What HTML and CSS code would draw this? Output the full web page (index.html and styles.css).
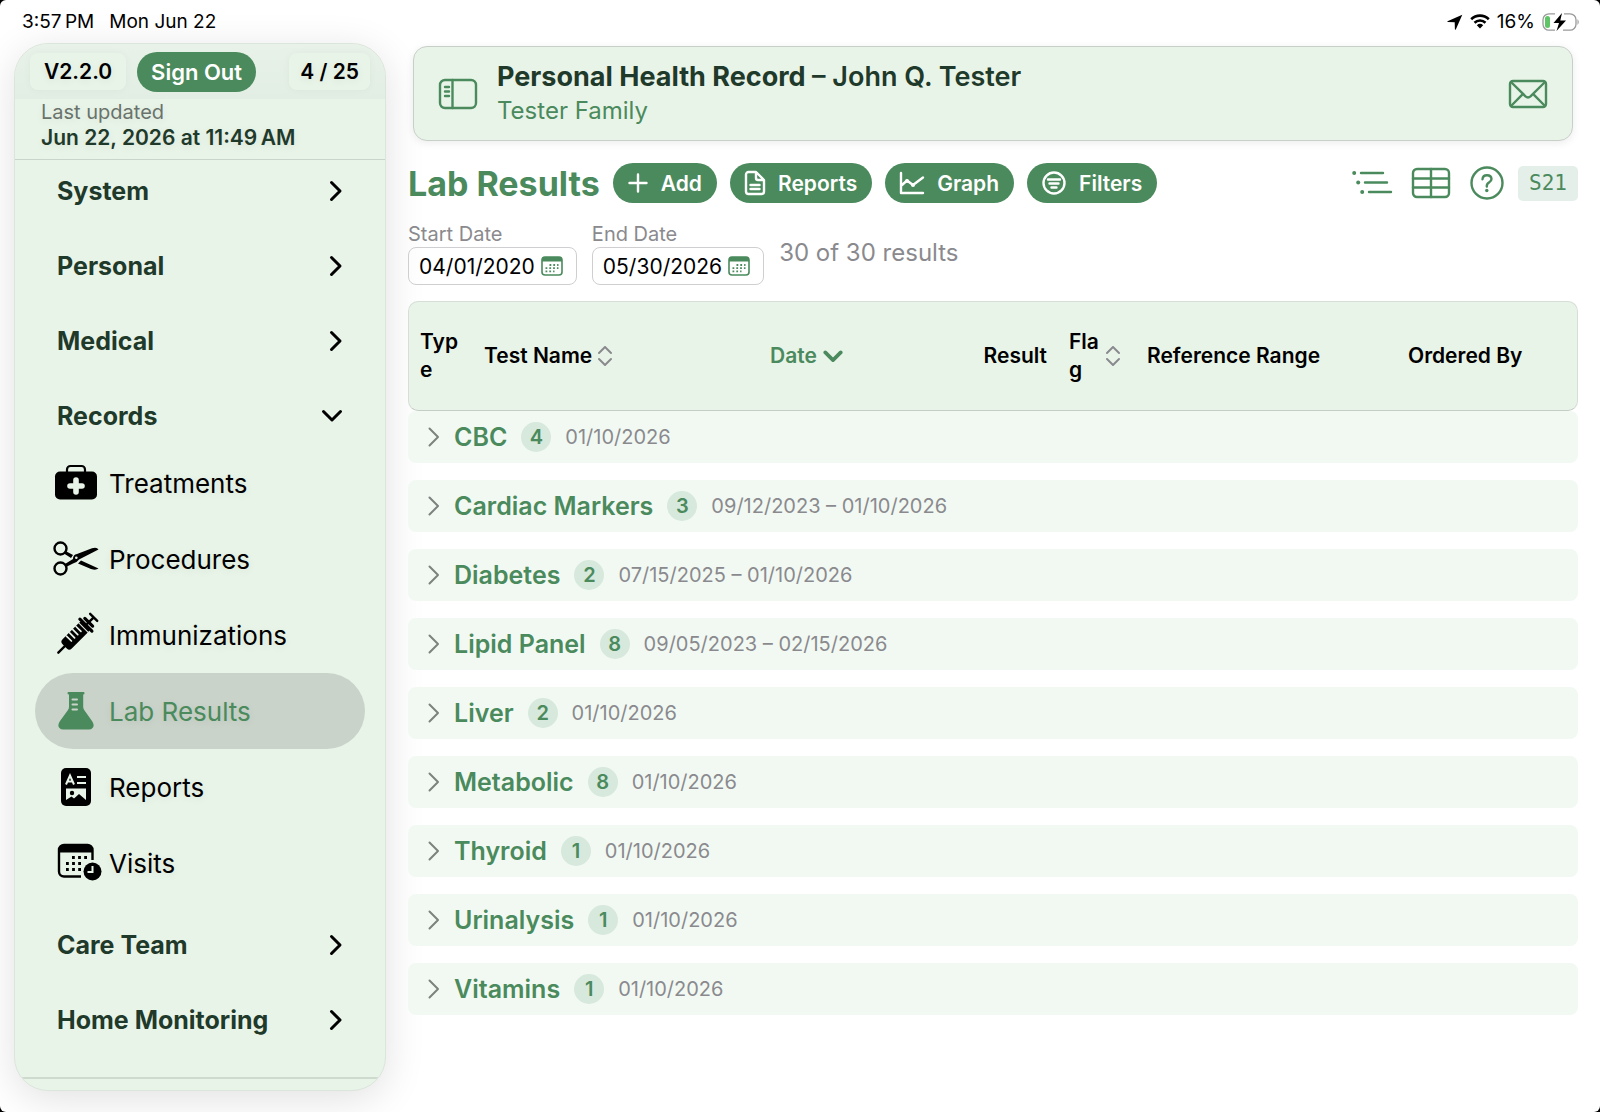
FILE: index.html
```html
<!DOCTYPE html>
<html lang="en">
<head>
    <meta charset="UTF-8">
    <meta name="viewport" content="width=device-width, initial-scale=1.0">
    <title>Personal Health Record - Lab Results</title>
    <link rel="stylesheet" href="styles.css">
</head>
<body>
    <!-- shared symbols -->
    <svg class="symbols" width="0" height="0" aria-hidden="true">
        <symbol id="chevron-right" viewBox="0 0 14 22"><path d="M2.5 2.5 L11 11 L2.5 19.500"/></symbol>
        <symbol id="chevron-down" viewBox="0 0 22 14"><path d="M2.500 2.500 L11 11 L19.500 2.500"/></symbol>
        <symbol id="sort" viewBox="0 0 14 20"><path d="M1 7 L7 1 L13 7 M1 13 L7 19 L13 13"/></symbol>
        <symbol id="calendar" viewBox="0 0 22 20">
            <rect x="1" y="1" width="20" height="18" rx="3" fill="none" stroke="currentColor" stroke-width="1.600"/>
            <path d="M1 5.500 V4 a3 3 0 0 1 3-3 h14 a3 3 0 0 1 3 3 v1.500z" fill="currentColor"/>
            <path d="M8.500 9h9M4.500 12.200h13M4.500 15.400h9" fill="none" stroke="currentColor" stroke-width="1.800" stroke-dasharray="1.800 2"/>
        </symbol>
    </svg>

    <div class="screen">
        <div class="status-bar">
            <span class="status-left"><span>3:57&thinsp;PM</span><span>Mon Jun 22</span></span>
            <span class="status-right">
                <svg width="16" height="16" viewBox="0 0 16 16"><path d="M15.300.7 L.5 7.300 Q0 7.900.8 8 L7.700 8.200 L7.900 15.200 Q8.200 16 8.800 15.400z"/></svg>
                <svg width="20" height="15" viewBox="0 0 20 15"><path d="M1.200 5.200 a12.600 12.600 0 0 1 17.600 0M4.500 8.700 a8 8 0 0 1 11 0" fill="none" stroke="#000" stroke-width="2.600"/><path d="M10 14.500 L6.800 11.200 a4.700 4.700 0 0 1 6.400 0z"/></svg>
                <span>16%</span>
                <svg width="38" height="18" viewBox="0 0 38 18">
                    <path d="M13 .8 H7 a6 6 0 0 0-6 6 v4.400 a6 6 0 0 0 6 6 h6 M22 .8 h6 a6 6 0 0 1 6 6 v4.400 a6 6 0 0 1-6 6 h-7" fill="none" stroke="#999" stroke-width="1.300"/>
                    <path d="M35.500 6 q2.500 3 0 6z" fill="#999"/>
                    <rect x="3" y="3" width="5" height="12" rx="2.500" fill="#5ec466"/>
                    <path d="M20 0 L11.500 10 h5.500 L14.500 18 L24 7.500 h-5.700z"/>
                </svg>
            </span>
        </div>

        <div class="layout">
            <aside class="sidebar">
                <div class="sidebar-top">
                    <span class="chip">V2.2.0</span>
                    <button type="button" class="sign-out">Sign Out</button>
                    <span class="chip count-chip">4 / 25</span>
                </div>
                <div class="last-updated">
                    <span class="muted">Last updated</span>
                    <strong>Jun 22, 2026 at 11:49&thinsp;AM</strong>
                </div>
                <nav>
                    <ul class="nav-list">
                        <li><button type="button" class="nav-group">System <svg class="chev" width="14" height="22"><use href="#chevron-right"/></svg></button></li>
                        <li><button type="button" class="nav-group">Personal <svg class="chev" width="14" height="22"><use href="#chevron-right"/></svg></button></li>
                        <li><button type="button" class="nav-group">Medical <svg class="chev" width="14" height="22"><use href="#chevron-right"/></svg></button></li>
                        <li>
                            <button type="button" class="nav-group" aria-expanded="true">Records <svg class="chev" width="22" height="14"><use href="#chevron-down"/></svg></button>
                            <ul class="sub-list">
                                <li><a href="#treatments">
                                    <svg width="46" height="40" viewBox="0 0 46 40">
                                        <path d="M14 9 V6.500 a3.500 3.500 0 0 1 3.500-3.500 h11 a3.500 3.500 0 0 1 3.500 3.500 V9" fill="none" stroke="currentColor" stroke-width="2.200"/>
                                        <rect x="2" y="8.500" width="42" height="28" rx="5"/>
                                        <path d="M23 17v12M17 23h12" stroke="#e9f4e9" stroke-width="5.600" stroke-linecap="round"/>
                                    </svg>Treatments</a></li>
                                <li><a href="#procedures">
                                    <svg width="46" height="40" viewBox="0 0 46 40">
                                        <g fill="none" stroke="currentColor" stroke-width="2.400"><circle cx="7.500" cy="9.500" r="6"/><circle cx="7.500" cy="29.500" r="6"/></g>
                                        <path d="M12.500 12 L20 16 l-2 3 L11 14.500z M12 25 L20 20 Q20 15.500 24 15 L39 9.200 Q44 7.800 45.500 10.500 L26 20.500 Q24 23.500 20 24.500 L13 28z M28 21.500 L45.500 29.500 Q43 31.500 38 30 L25 24.500z"/>
                                        <circle cx="23.300" cy="18.800" r="1.300" fill="#e9f4e9"/>
                                    </svg>Procedures</a></li>
                                <li><a href="#immunizations">
                                    <svg width="46" height="44" viewBox="0 0 46 44">
                                        <g transform="rotate(45 23 22)">
                                            <path d="M23 47 V36 M23 -2 V6 M18 -3 h10" fill="none" stroke="currentColor" stroke-width="2.400" stroke-linecap="round"/>
                                            <rect x="16.500" y="8" width="13" height="30" rx="3.500"/>
                                            <path d="M14.500 8h17M17.500 4h11" stroke="currentColor" stroke-width="3.200" stroke-linecap="round"/>
                                            <path d="M16 11.500h14" stroke="#e9f4e9" stroke-width="1"/>
                                            <path d="M17 16h7M17 20.500h7M17 25h7M17 29.500h7" stroke="#e9f4e9" stroke-width="1.700" stroke-linecap="round"/>
                                        </g>
                                    </svg>Immunizations</a></li>
                                <li><a href="#lab-results" class="selected" aria-current="page">
                                    <svg width="46" height="40" viewBox="0 0 46 40">
                                        <path d="M15.500 1 h15 q1 0 1 1.300 t-1.300 1.300 V16 q0 1.500 1 3 L39 30 q3 4.500.5 7 q-1 1.500-4 1.500 H10.500 q-3 0-4-1.500 q-2.500-2.500.5-7 L15 19 q1-1.500 1-3 V3.600 q-1.500 0-1.500-1.300 t1-1.300z"/>
                                        <path d="M19.500 8.500h4.500M19.500 13.500h4.500M19.500 18.500h4.500" stroke="#c9d3c9" stroke-width="2" stroke-linecap="round"/>
                                    </svg>Lab Results</a></li>
                                <li><a href="#reports">
                                    <svg width="46" height="40" viewBox="0 0 46 40">
                                        <rect x="8" y="1" width="30" height="38" rx="5"/>
                                        <path d="M13 17.500 L17 8.500 L21 17.500 M14.500 14.500 h5 M24 10h9M24 16h9" fill="none" stroke="#e9f4e9" stroke-width="2"/>
                                        <path d="M13 21.500 h20 V33 l-7-6 l-5 4.500 l-2.500-2 L13 33z" fill="#e9f4e9"/>
                                        <circle cx="19" cy="26" r="2.200"/>
                                    </svg>Reports</a></li>
                                <li><a href="#visits">
                                    <svg width="46" height="40" viewBox="0 0 46 40">
                                        <path d="M39.500 17 V7 a5 5 0 0 0-5-5 H11 a5 5 0 0 0-5 5 V28.500 a5 5 0 0 0 5 5 H28" fill="none" stroke="currentColor" stroke-width="2.400"/>
                                        <path d="M6 9.500 V6 a4 4 0 0 1 4-4 h25.500 a4 4 0 0 1 4 4 v3.500z"/>
                                        <path d="M19 14.500h15M13 20.500h15M13 26.500h15" stroke="currentColor" stroke-width="2.800" stroke-dasharray="2.800 3.300"/>
                                        <circle cx="39.500" cy="28.500" r="9"/>
                                        <path d="M39.500 23 v6 h-5" fill="none" stroke="#e9f4e9" stroke-width="2"/>
                                    </svg>Visits</a></li>
                            </ul>
                        </li>
                        <li><button type="button" class="nav-group">Care Team <svg class="chev" width="14" height="22"><use href="#chevron-right"/></svg></button></li>
                        <li><button type="button" class="nav-group">Home Monitoring <svg class="chev" width="14" height="22"><use href="#chevron-right"/></svg></button></li>
                    </ul>
                </nav>
            </aside>

            <main>
                <header class="record-card">
                    <button type="button" class="icon-btn" aria-label="Toggle sidebar">
                        <svg class="line-icon" width="38" height="30" viewBox="0 0 38 30"><rect x="1" y="1" width="36" height="28" rx="5"/><path d="M13.500 1v28M6 8h4M6 12.500h4M6 17h4"/></svg>
                    </button>
                    <div class="record-title">
                        <p class="record-name">Personal Health Record <span>– John Q. Tester</span></p>
                        <p class="record-family">Tester Family</p>
                    </div>
                    <button type="button" class="icon-btn" aria-label="Messages">
                        <svg class="line-icon" width="38" height="28" viewBox="0 0 38 28"><rect x="1" y="1" width="36" height="26" rx="3"/><path d="M2 2 L16.500 16.300 q2.500 2.200 5 0 L36 2 M2 26 L14 13.800 M36 26 L24 13.800"/></svg>
                    </button>
                </header>

                <div class="toolbar">
                    <h1>Lab Results</h1>
                    <button type="button" class="pill">
                        <svg width="20" height="20" viewBox="0 0 20 20"><path d="M10 1.500v17M1.500 10h17"/></svg>Add</button>
                    <button type="button" class="pill">
                        <svg width="20" height="24" viewBox="0 0 20 24"><path d="M3.500 1 H11 L19 9 V20.500 a2.500 2.500 0 0 1-2.500 2.500 H3.500 A2.500 2.500 0 0 1 1 20.500 V3.500 A2.500 2.500 0 0 1 3.500 1z M11 1.500 V7 a2 2 0 0 0 2 2 h5.500 M5.500 14h9M5.500 18h9"/></svg>Reports</button>
                    <button type="button" class="pill">
                        <svg width="24" height="22" viewBox="0 0 24 22"><path d="M1 1v20h22 M2 13 L7 8.500 L13 13 L23 5.500"/><g fill="currentColor" stroke="none"><circle cx="7" cy="9" r="2"/><circle cx="13" cy="13" r="2"/></g></svg>Graph</button>
                    <button type="button" class="pill">
                        <svg width="24" height="24" viewBox="0 0 24 24"><circle cx="12" cy="12" r="10.500"/><path d="M6 8.500h12M7.500 12.500h9M9.500 16.500h5"/></svg>Filters</button>
                    <div class="tools">
                        <button type="button" class="icon-btn" aria-label="Outline view">
                            <svg class="line-icon" width="40" height="26" viewBox="0 0 40 26"><path d="M9 3h22M13 12.500h22M17 22h22"/><g class="dots"><circle cx="2.200" cy="3" r="2"/><circle cx="6.200" cy="12.500" r="2"/><circle cx="10.200" cy="22" r="2"/></g></svg>
                        </button>
                        <button type="button" class="icon-btn" aria-label="Table view">
                            <svg class="line-icon" width="38" height="30" viewBox="0 0 38 30"><rect x="1" y="1" width="36" height="28" rx="4"/><path d="M19 1v28M1 10.500h36M1 19.500h36"/></svg>
                        </button>
                        <button type="button" class="icon-btn" aria-label="Help">
                            <svg class="line-icon" width="34" height="34" viewBox="0 0 34 34"><circle cx="17" cy="17" r="15.500"/><path d="M12.500 13.200 q.2-4 4.500-4 t4.500 3.800 q0 2-2.500 3.600 t-2.200 4"/><g class="dots"><circle cx="16.800" cy="24.500" r="1.700"/></g></svg>
                        </button>
                        <span class="screen-code">S21</span>
                    </div>
                </div>

                <div class="date-filters">
                    <div class="date-field">
                        <label for="start-date">Start Date</label>
                        <div class="date-box"><input type="text" id="start-date" value="04/01/2020"><svg width="22" height="20"><use href="#calendar"/></svg></div>
                    </div>
                    <div class="date-field">
                        <label for="end-date">End Date</label>
                        <div class="date-box"><input type="text" id="end-date" value="05/30/2026"><svg width="22" height="20"><use href="#calendar"/></svg></div>
                    </div>
                    <span class="result-count">30 of 30 results</span>
                </div>

                <table class="results">
                    <colgroup>
                        <col class="col-type"><col class="col-name"><col class="col-date"><col class="col-result"><col class="col-flag"><col class="col-range"><col class="col-ordered">
                    </colgroup>
                    <thead>
                        <tr>
                            <th scope="col" class="wrap">Type</th>
                            <th scope="col"><button type="button" class="sort-btn">Test Name <svg class="sort" width="14" height="20"><use href="#sort"/></svg></button></th>
                            <th scope="col" aria-sort="descending"><button type="button" class="sort-btn active">Date <svg class="chev" width="20" height="13"><use href="#chevron-down"/></svg></button></th>
                            <th scope="col" class="right">Result</th>
                            <th scope="col" class="wrap"><button type="button" class="sort-btn"><span>Flag</span> <svg class="sort" width="14" height="20"><use href="#sort"/></svg></button></th>
                            <th scope="col">Reference Range</th>
                            <th scope="col">Ordered By</th>
                        </tr>
                    </thead>
                    <tbody>
                        <tr><td colspan="7"><button type="button" class="group-row"><svg width="14" height="22"><use href="#chevron-right"/></svg><b>CBC</b><span class="badge">4</span><span class="range">01/10/2026</span></button></td></tr>
                        <tr><td colspan="7"><button type="button" class="group-row"><svg width="14" height="22"><use href="#chevron-right"/></svg><b>Cardiac Markers</b><span class="badge">3</span><span class="range">09/12/2023 – 01/10/2026</span></button></td></tr>
                        <tr><td colspan="7"><button type="button" class="group-row"><svg width="14" height="22"><use href="#chevron-right"/></svg><b>Diabetes</b><span class="badge">2</span><span class="range">07/15/2025 – 01/10/2026</span></button></td></tr>
                        <tr><td colspan="7"><button type="button" class="group-row"><svg width="14" height="22"><use href="#chevron-right"/></svg><b>Lipid Panel</b><span class="badge">8</span><span class="range">09/05/2023 – 02/15/2026</span></button></td></tr>
                        <tr><td colspan="7"><button type="button" class="group-row"><svg width="14" height="22"><use href="#chevron-right"/></svg><b>Liver</b><span class="badge">2</span><span class="range">01/10/2026</span></button></td></tr>
                        <tr><td colspan="7"><button type="button" class="group-row"><svg width="14" height="22"><use href="#chevron-right"/></svg><b>Metabolic</b><span class="badge">8</span><span class="range">01/10/2026</span></button></td></tr>
                        <tr><td colspan="7"><button type="button" class="group-row"><svg width="14" height="22"><use href="#chevron-right"/></svg><b>Thyroid</b><span class="badge">1</span><span class="range">01/10/2026</span></button></td></tr>
                        <tr><td colspan="7"><button type="button" class="group-row"><svg width="14" height="22"><use href="#chevron-right"/></svg><b>Urinalysis</b><span class="badge">1</span><span class="range">01/10/2026</span></button></td></tr>
                        <tr><td colspan="7"><button type="button" class="group-row"><svg width="14" height="22"><use href="#chevron-right"/></svg><b>Vitamins</b><span class="badge">1</span><span class="range">01/10/2026</span></button></td></tr>
                    </tbody>
                </table>
            </main>
        </div>
    </div>
</body>
</html>
```

FILE: styles.css
```css
:root {
    --green: #4a8a5c;
    --dark-green: #1f3a2a;
    --mint: #e9f4e9;
    --row: #f2f9f3;
    --gray: #8a8a8e;
}

* {
    box-sizing: border-box;
    margin: 0;
    padding: 0;
}

html {
    background: #000;
}

body {
    font-family: Inter, "Liberation Sans", sans-serif;
    color: #000;
}

button {
    font: inherit;
    color: inherit;
    background: none;
    border: none;
    cursor: pointer;
}

ul {
    list-style: none;
}

svg {
    display: block;
    flex: none;
    overflow: visible;
}

.symbols {
    position: absolute;
}

.screen {
    min-height: 100vh;
    display: flex;
    flex-direction: column;
    background: #fff;
    border-radius: 6px;
    overflow: hidden;
}

.status-bar {
    display: flex;
    justify-content: space-between;
    height: 43px;
    padding: 0 20px 0 22px;
    font-size: 19px;
}

.status-left,
.status-right {
    display: flex;
    align-items: center;
}

.status-left {
    gap: 15px;
}

.status-right {
    gap: 7px;
}

.layout {
    flex: 1;
    display: flex;
    align-items: stretch;
    gap: 22px;
    padding: 0 22px 21px 14px;
}

/* Sidebar */
.sidebar {
    width: 372px;
    flex: none;
    display: flex;
    flex-direction: column;
    background: var(--mint);
    border: 1px solid #dbe5db;
    border-radius: 34px;
    box-shadow: 0 8px 40px rgba(0, 0, 0, 0.12);
    overflow: hidden;
    text-shadow: 0 2px 8px rgba(0, 0, 0, 0.08);
}

.sidebar-top {
    display: flex;
    align-items: center;
    gap: 11px;
    height: 55px;
    padding: 0 15px;
    background: linear-gradient(#e8f2e8, #e2ede3);
    font-size: 21px;
    font-weight: 600;
}

.chip {
    height: 37px;
    line-height: 37px;
    padding: 0 14px;
    background: var(--mint);
    border-radius: 8px;
    box-shadow: 0 0 8px rgba(0, 0, 0, 0.04);
}

.count-chip {
    margin-left: auto;
    padding: 0 11px;
}

.sign-out {
    height: 40px;
    padding: 0 14px;
    border-radius: 20px;
    background: var(--green);
    color: #fff;
    font-size: 22px;
}

.last-updated {
    height: 61px;
    padding: 0 26px;
    border-bottom: 1px solid #c9d4ca;
    line-height: 26px;
}

.last-updated .muted {
    display: block;
    font-size: 20px;
    color: #69736b;
}

.last-updated strong {
    display: block;
    font-size: 21px;
    font-weight: 600;
    color: var(--dark-green);
}

nav {
    flex: 1;
    margin-bottom: 11px;
    border-bottom: 2px solid #cfdacf;
}

.nav-list {
    display: flex;
    flex-direction: column;
    gap: 14px;
}

.nav-group {
    display: flex;
    justify-content: space-between;
    align-items: center;
    width: 100%;
    height: 61px;
    padding: 0 42px;
    font-size: 25px;
    font-weight: 700;
    color: var(--dark-green);
}

.chev {
    fill: none;
    stroke: #000;
    stroke-width: 3;
    stroke-linecap: round;
    stroke-linejoin: round;
}

.sub-list {
    margin: -1px 0;
    padding: 0 20px;
}

.sub-list a {
    display: flex;
    align-items: center;
    gap: 10px;
    height: 76px;
    padding: 0 18px;
    border-radius: 38px;
    color: #000;
    font-size: 26px;
    text-decoration: none;
}

.sub-list svg {
    fill: currentColor;
}

.sub-list a.selected {
    background: #c9d3c9;
    color: var(--green);
}

/* Main */
main {
    flex: 1;
    min-width: 0;
    padding-top: 3px;
}

.record-card {
    display: flex;
    align-items: center;
    gap: 20px;
    margin: 0 5px;
    height: 95px;
    padding: 0 25px;
    background: var(--mint);
    border: 1px solid #c8cfc9;
    border-radius: 14px;
    box-shadow: 0 2px 8px rgba(0, 0, 0, 0.08);
}

.record-title {
    flex: 1;
    line-height: 34px;
}

.record-name {
    font-size: 27px;
    font-weight: 700;
    color: var(--dark-green);
}

.record-name span {
    font-weight: 600;
}

.record-family {
    font-size: 24px;
    color: var(--green);
}

.line-icon {
    fill: none;
    stroke: var(--green);
    stroke-width: 2.4;
    stroke-linecap: round;
    stroke-linejoin: round;
}

.dots {
    fill: var(--green);
    stroke: none;
}

.toolbar {
    display: flex;
    align-items: center;
    gap: 13px;
    height: 42px;
    margin-top: 21px;
}

h1 {
    font-size: 34px;
    font-weight: 700;
    color: var(--green);
}

.pill {
    display: flex;
    align-items: center;
    gap: 13px;
    height: 40px;
    padding: 0 15px;
    border-radius: 20px;
    background: var(--green);
    color: #fff;
    font-size: 21px;
    font-weight: 600;
}

.pill svg {
    fill: none;
    stroke: currentColor;
    stroke-width: 2.4;
    stroke-linecap: round;
    stroke-linejoin: round;
}

.tools {
    display: flex;
    align-items: center;
    gap: 20px;
    margin-left: auto;
}

.screen-code {
    margin-left: -6px;
    height: 35px;
    padding: 0 11px;
    border-radius: 5px;
    background: #e5efe9;
    color: var(--green);
    font: 21px/35px "DejaVu Sans Mono", "Liberation Mono", monospace;
}

.date-filters {
    display: flex;
    gap: 15px;
    margin-top: 17px;
}

.date-field label {
    display: block;
    line-height: 26px;
    font-size: 20px;
    color: var(--gray);
}

.date-box {
    display: flex;
    align-items: center;
    gap: 6px;
    height: 38px;
    padding: 0 13px 0 10px;
    border: 1px solid #cfcfd2;
    border-radius: 8px;
    color: var(--green);
}

.date-box input {
    field-sizing: content;
    border: none;
    outline: none;
    background: none;
    font: 21px Inter, "Liberation Sans", sans-serif;
    color: #000;
}

.result-count {
    line-height: 64px;
    font-size: 24px;
    color: var(--gray);
}

/* Results table */
.results {
    width: 100%;
    margin-top: 16px;
    table-layout: fixed;
    border-collapse: separate;
    border-spacing: 0;
}

.col-type { width: 65px; }
.col-name { width: 286px; }
.col-date { width: 201px; }
.col-result { width: 98px; }
.col-flag { width: 78px; }
.col-range { width: 261px; }
.col-ordered { width: 181px; }

.results th {
    height: 110px;
    padding: 0 11px;
    background: var(--mint);
    border-top: 1px solid #d6ded7;
    border-bottom: 1px solid #c6cdc7;
    font-size: 21px;
    font-weight: 600;
    line-height: 28px;
    text-align: left;
}

.results th:first-child {
    border-left: 1px solid #d6ded7;
    border-radius: 10px 0 0 10px;
}

.results th:last-child {
    border-right: 1px solid #d6ded7;
    border-radius: 0 10px 10px 0;
}

.results th.right {
    text-align: right;
}

.results th.wrap {
    word-break: break-all;
}

.sort-btn {
    display: flex;
    align-items: center;
    gap: 6px;
    text-align: left;
}

.wrap .sort-btn span {
    width: 31px;
}

.sort-btn.active {
    color: var(--green);
}

.sort-btn .chev {
    stroke: var(--green);
    stroke-width: 4;
}

.sort {
    fill: none;
    stroke: var(--gray);
    stroke-width: 2;
    stroke-linecap: round;
    stroke-linejoin: round;
}

.results td {
    padding-bottom: 17px;
}

.group-row {
    display: flex;
    align-items: center;
    width: 100%;
    height: 52px;
    padding: 0 19px;
    border-radius: 8px;
    background: var(--row);
    text-align: left;
}

.group-row svg {
    margin-right: 13px;
    fill: none;
    stroke: #7d827e;
    stroke-width: 2;
    stroke-linecap: round;
    stroke-linejoin: round;
}

.group-row b {
    font-size: 25px;
    font-weight: 600;
    color: var(--green);
}

.badge {
    min-width: 30px;
    height: 30px;
    margin: 0 14px;
    border-radius: 15px;
    background: #d7e8dc;
    color: var(--green);
    font-size: 20px;
    font-weight: 600;
    line-height: 30px;
    text-align: center;
}

.range {
    font-size: 20px;
    color: var(--gray);
}
```
